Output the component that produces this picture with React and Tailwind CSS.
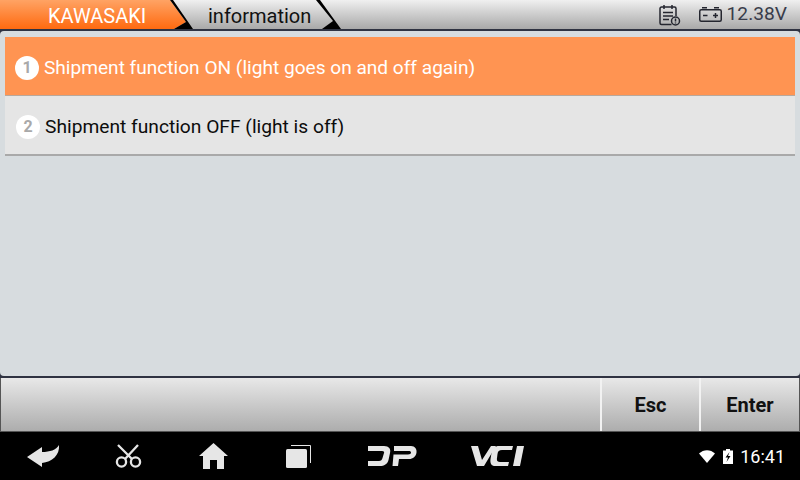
import React from "react";

function TabEdges() {
  return (
    <svg className="absolute left-0 top-0" width="360" height="29" viewBox="0 0 360 29">
      <defs>
        <linearGradient id="o" x1="0" y1="0" x2="0" y2="1">
          <stop offset="0" stopColor="#ffa364" />
          <stop offset="1" stopColor="#ff6a10" />
        </linearGradient>
      </defs>
      <polygon points="0,0 170,0 186,22 174,29 0,29" fill="url(#o)" />
      <polygon points="170,0 173,0 193,29 174,29 186,22" fill="#000" />
      <polygon points="316,0 320,0 341,29 322,29 333,21" fill="#000" />
    </svg>
  );
}

function Num({ n }) {
  return (
    <span className="flex h-[24px] w-[24px] shrink-0 items-center justify-center rounded-full bg-white text-[16px] font-bold text-[#a9a9a9]">
      {n}
    </span>
  );
}

function Row({ n, text, active }) {
  return (
    <div
      className={
        active
          ? "flex h-[59px] items-center gap-[5px] border-b border-[#b8a89c] bg-[#ff9452] pl-[10px] pt-[4px] text-[19.1px] text-white"
          : "flex h-[60px] items-center gap-[5px] border-b-2 border-[#a9a9a9] bg-[#e5e5e5] pl-[11px] pt-[4px] text-[19.2px] text-[#0c0c0c]"
      }
    >
      <Num n={n} />
      <span>{text}</span>
    </div>
  );
}

export default function App() {
  return (
    <div
      className="flex h-[480px] w-[800px] flex-col overflow-hidden bg-black"
      style={{ fontFamily: "Roboto, sans-serif" }}
    >
      <header className="relative flex h-[29px] shrink-0 items-start bg-gradient-to-b from-[#f0f0f0] to-[#a9a9a9]">
        <TabEdges />
        <span className="relative ml-[48px] w-[160px] text-[20px] leading-[32px] text-white">KAWASAKI</span>
        <span className="relative text-[20px] leading-[32px] text-[#111]">information</span>
        <div className="relative ml-auto mr-[13px] flex h-[29px] items-center text-[#383c4a]">
          <svg width="22" height="22" viewBox="0 0 22 22" fill="none" stroke="#24262f" strokeWidth="1.5" className="mr-[18px]">
            <path d="M12.5 20.5H2.5A1.5 1.5 0 0 1 1 19V4.5A1.5 1.5 0 0 1 2.5 3h13A1.5 1.5 0 0 1 17 4.5V12" />
            <path d="M5 1v4M13 1v4M4 8.5h10M4 12h10M4 15.5h6" />
            <circle cx="16.5" cy="17" r="4" />
            <path d="M16.5 14.5v3M16.5 18.6v.9" />
          </svg>
          <svg width="23" height="15" viewBox="0 0 23 15" fill="none" stroke="#24262f" strokeWidth="1.5" className="mr-[5px]">
            <rect x="0.75" y="2.75" width="21.5" height="11.5" rx="1.5" />
            <path d="M3 .75h5M15 .75h5M4 8.5h4.5M14 8.5h5M16.5 6v5" />
          </svg>
          <span className="text-[19.2px]">12.38V</span>
        </div>
      </header>

      <div className="flex min-h-0 flex-1 bg-[#2f3342] py-[2px]">
        <main className="flex w-full flex-col rounded-[4px] bg-[#d7dcdf] px-[5px] pt-[6px]">
          <Row n="1" active text="Shipment function ON (light goes on and off again)" />
          <Row n="2" text="Shipment function OFF (light is off)" />
        </main>
      </div>

      <div className="flex h-[54px] shrink-0 justify-end border-x border-b border-[#555] bg-gradient-to-b from-[#e8e8e8] to-[#adadad] text-[20px] font-bold text-[#111]">
        <div className="flex w-[99px] items-center justify-center border-l-2 border-[#f2f2f2]">Esc</div>
        <div className="flex w-[100px] items-center justify-center border-l-2 border-[#f2f2f2]">Enter</div>
      </div>

      <nav className="relative flex h-[48px] shrink-0 items-center bg-black text-[#e6e6e6]">
        <svg className="ml-[26px]" width="34" height="24" viewBox="0 0 34 24" fill="#e6e6e6">
          <path d="M1 13 16 3V8C24 8 30 6 33 1C34 11 26 18 16 19V23Z" />
        </svg>
        <svg className="ml-[55px]" width="28" height="25" viewBox="0 0 28 25" fill="none" stroke="#e6e6e6" strokeWidth="2.3">
          <circle cx="6.5" cy="18" r="4.6" />
          <circle cx="20.5" cy="18" r="4.6" />
          <path d="M3 1 17 15M23 1 10 15" />
        </svg>
        <svg className="ml-[56px]" width="29" height="26" viewBox="0 0 29 26" fill="#e6e6e6">
          <path d="M14.5 0 29 13h-4v13h-7V17h-7v9H4V13H0Z" />
        </svg>
        <svg className="ml-[58px]" width="25" height="23" viewBox="0 0 25 23" fill="#e6e6e6">
          <path d="M5 0H24a1 1 0 0 1 1 1V18H24V1H5Z" />
          <rect x="0" y="4" width="21" height="19" rx="1.5" />
        </svg>
        <svg className="ml-[57px]" width="49" height="20" viewBox="0 0 49 20" fill="#e6e6e6">
          <path d="M0 0H16C21 0 23 3 22 7L20.5 14C19.5 18 16 20 12 20H0V15H11C13 15 14 14 14.5 12L16 7C16.5 6 16 5 14 5H0Z" />
          <path d="M26 0H43C47 0 49 3 48.5 6.5C48 10.5 45 13 41 13H31L30 20H24.5L25.5 8.5H40C42 8.5 43 7.5 43 6.5C43 5.5 42 5 41 5H26Z" />
        </svg>
        <svg className="ml-[54px]" width="53" height="20" viewBox="0 0 53 20" fill="#e6e6e6">
          <path d="M0 0H7L11 14L20 0H25L13 20H6Z" />
          <path d="M28 0H42L41 4H31C28 4 27 5 26.5 8L26 12C25.5 15 26.5 16 29 16H38L37 20H24C20 20 19 17 19.5 13L20.5 7C21.5 2 24 0 28 0Z" />
          <path d="M46 0H53L49 20H42Z" />
        </svg>
        <div className="ml-auto mr-[15px] flex items-center">
          <svg width="16" height="13" viewBox="0 0 16 13" fill="#fff" className="mr-[8px]">
            <path d="M0 3.5C4.5-1 11.5-1 16 3.5L8 13Z" />
          </svg>
          <svg width="10" height="15" viewBox="0 0 10 15" className="mr-[7px]">
            <path d="M3 0h4v1.5h3V15H0V1.5h3Z" fill="#fff" />
            <path d="M6.5 3 2.5 8.5h2.5L3.5 13l4-6H5Z" fill="#000" />
          </svg>
          <span className="text-[18px] text-white">16:41</span>
        </div>
      </nav>
    </div>
  );
}
